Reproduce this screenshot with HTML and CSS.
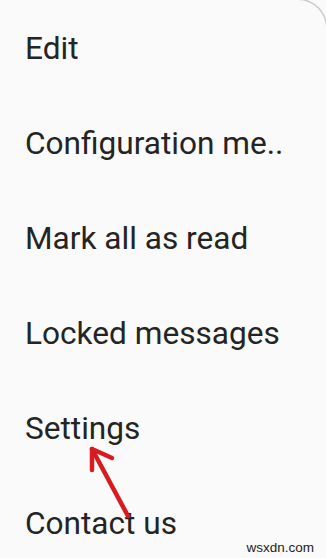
FILE: index.html
```html
<!DOCTYPE html>
<html lang="en">
<head>
  <meta charset="UTF-8">
  <meta name="viewport" content="width=device-width, initial-scale=1.0">
  <title>Menu</title>
  <link rel="stylesheet" href="styles.css">
</head>
<body>
  <div class="menu">
    <ul class="menu-list">
      <li>Edit</li>
      <li>Configuration me..</li>
      <li>Mark all as read</li>
      <li>Locked messages</li>
      <li>Settings</li>
      <li>Contact us</li>
    </ul>

    <!-- seta vermelha apontando para Settings -->
    <svg class="arrow" width="326" height="558" viewBox="0 0 326 558">
      <g stroke="#d81b20" stroke-width="4.5" stroke-linecap="round" stroke-linejoin="round" fill="none">
        <line x1="128" y1="516" x2="92" y2="449"/>
        <polyline points="92,470 92,449 112,458"/>
      </g>
    </svg>

    <div class="watermark">wsxdn.com</div>
  </div>
</body>
</html>
```

FILE: styles.css
```css
html, body {
  margin: 0;
  padding: 0;
  background-color: #fafafa;
}
body {
  font-family: Roboto, 'Noto Sans', sans-serif;
  color: #242424;
  width: 326px;
  height: 558px;
  overflow: hidden;
}
.menu {
  position: relative;
  height: 558px;
  background-color: #fafafa;
  border-top-right-radius: 28px;
  box-shadow: 1px -1px 0 #c8c8c8;
}
.menu-list {
  list-style: none;
  margin: 0;
  padding: 1px 0 0 25px;
}
.menu-list li {
  height: 95px;
  line-height: 95px;
  font-size: 31.6px;
  white-space: nowrap;
}
.arrow {
  position: absolute;
  top: 0;
  left: 0;
}
.watermark {
  position: absolute;
  right: 12px;
  bottom: 3px;
  font-family: 'Liberation Sans', Arial, sans-serif;
  font-size: 13.5px;
  color: #222;
}
```
